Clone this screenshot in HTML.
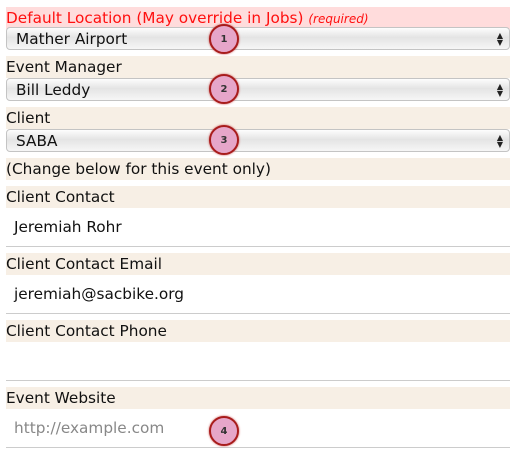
<!DOCTYPE html>
<html><head><meta charset="utf-8"><style>
body{margin:0;width:524px;height:462px;background:#fff;font-family:"DejaVu Sans","Liberation Sans",sans-serif;font-size:15.3px;color:#111;position:relative;overflow:hidden}
.l{position:absolute;left:6px;width:504px;height:22px;line-height:23px;background:#f7efe5;white-space:nowrap}
.sel{position:absolute;left:6px;width:502px;height:21px;border:1px solid #c4c4c4;border-radius:4px;background:linear-gradient(#fdfdfd,#e4e4e4 45%,#f6f6f6);line-height:22px;box-sizing:content-box}
.sel span{position:absolute;left:9px}
.sel i{position:absolute;right:6px;top:4px;font-style:normal;font-size:8px;line-height:7px;color:#222}
.in{position:absolute;left:6px;width:504px;height:1px;background:#ccc}
.t{position:absolute;left:14px;white-space:nowrap}
.b{position:absolute;width:30px;height:30px;border:2px solid #a81c1c;border-radius:50%;background:#e6a6c9;box-sizing:border-box;font:bold 10px "DejaVu Sans",sans-serif;color:#333;text-align:center;line-height:27px;box-shadow:0 0 2px #c55}
</style></head><body>
<div class="l" style="top:7px;background:#ffdcdc;color:#ff1010">Default Location (May override in Jobs) <em style="font-size:12px">(required)</em></div>
<div class="sel" style="top:27px"><span>Mather Airport</span><i>▲<br>▼</i></div>
<div class="l" style="top:56px">Event Manager</div>
<div class="sel" style="top:78px"><span>Bill Leddy</span><i>▲<br>▼</i></div>
<div class="l" style="top:107px">Client</div>
<div class="sel" style="top:129px"><span>SABA</span><i>▲<br>▼</i></div>
<div class="l" style="top:158px">(Change below for this event only)</div>
<div class="l" style="top:186px">Client Contact</div>
<div class="t" style="top:218px">Jeremiah Rohr</div>
<div class="in" style="top:246px"></div>
<div class="l" style="top:253px">Client Contact Email</div>
<div class="t" style="top:285px">jeremiah@sacbike.org</div>
<div class="in" style="top:313px"></div>
<div class="l" style="top:320px">Client Contact Phone</div>
<div class="in" style="top:380px"></div>
<div class="l" style="top:387px">Event Website</div>
<div class="t" style="top:419px;color:#888">http://example.com</div>
<div class="in" style="top:447px"></div>
<div class="b" style="left:209px;top:24px">1</div>
<div class="b" style="left:209px;top:74px">2</div>
<div class="b" style="left:209px;top:125px">3</div>
<div class="b" style="left:209px;top:416px">4</div>
</body></html>
